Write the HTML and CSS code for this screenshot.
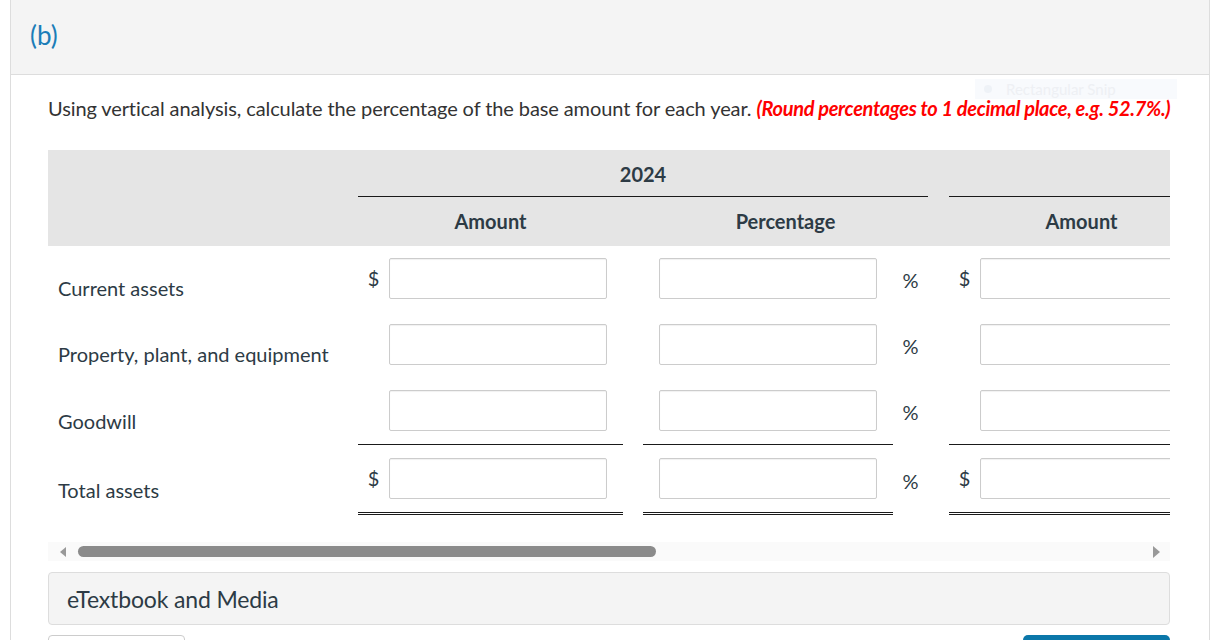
FILE: index.html
```html
<!DOCTYPE html>
<html>
<head>
<meta charset="utf-8">
<link rel="stylesheet" href="styles.css">
</head>
<body>
<div class="card">
  <div class="card-head"><span class="part">(b)</span></div>
  <div class="card-body">
    <div class="snip"><span class="snip-dot"></span><span class="snip-text">Rectangular Snip</span></div>
    <p class="prompt">Using vertical analysis, calculate the percentage of the base amount for each year. <span class="hint">(Round percentages to 1 decimal place, e.g. 52.7%.)</span></p>

    <div class="scroller">
      <div class="inner">
        <div class="thead grid">
          <div class="h-label"></div>
          <div class="h-year y1">2024</div>
          <div class="h-year y2"></div>
          <div class="h-sub c2">Amount</div>
          <div class="h-sub c4">Percentage</div>
          <div class="h-sub c7">Amount</div>
          <div class="h-sub c9"></div>
        </div>

        <div class="tbody grid">
          <!-- row 1 -->
          <div class="lbl">Current assets</div>
          <div class="amt"><span class="sym">$</span><span class="inp"></span></div>
          <div class="gap"></div>
          <div class="pct"><span class="inp"></span></div>
          <div class="psym">%</div>
          <div class="gap"></div>
          <div class="amt"><span class="sym">$</span><span class="inp"></span></div>
          <div class="gap"></div>
          <div class="pct"><span class="inp"></span></div>
          <div class="psym"></div>

          <!-- row 2 -->
          <div class="lbl">Property, plant, and equipment</div>
          <div class="amt"><span class="sym"></span><span class="inp"></span></div>
          <div class="gap"></div>
          <div class="pct"><span class="inp"></span></div>
          <div class="psym">%</div>
          <div class="gap"></div>
          <div class="amt"><span class="sym"></span><span class="inp"></span></div>
          <div class="gap"></div>
          <div class="pct"><span class="inp"></span></div>
          <div class="psym"></div>

          <!-- row 3 -->
          <div class="lbl">Goodwill</div>
          <div class="amt line"><span class="sym"></span><span class="inp"></span></div>
          <div class="gap"></div>
          <div class="pct line"><span class="inp"></span></div>
          <div class="psym">%</div>
          <div class="gap"></div>
          <div class="amt line"><span class="sym"></span><span class="inp"></span></div>
          <div class="gap"></div>
          <div class="pct line"><span class="inp"></span></div>
          <div class="psym"></div>

          <!-- row 4 -->
          <div class="lbl total">Total assets</div>
          <div class="amt dbl"><span class="sym">$</span><span class="inp"></span></div>
          <div class="gap"></div>
          <div class="pct dbl"><span class="inp"></span></div>
          <div class="psym">%</div>
          <div class="gap"></div>
          <div class="amt dbl"><span class="sym">$</span><span class="inp"></span></div>
          <div class="gap"></div>
          <div class="pct dbl"><span class="inp"></span></div>
          <div class="psym"></div>
        </div>
      </div>
    </div>

    <div class="sbar">
      <span class="arr-l"></span>
      <span class="thumb"></span>
      <span class="arr-r"></span>
    </div>

    <div class="media">eTextbook and Media</div>

    <div class="actions">
      <span class="btn-light"></span>
      <span class="btn-blue"></span>
    </div>
  </div>
</div>
</body>
</html>
```

FILE: styles.css
```css
* { box-sizing: border-box; }
html, body { margin: 0; padding: 0; background: #fff; }
body {
  font-family: Lato, "Open Sans", "Liberation Sans", sans-serif;
  color: #333;
  width: 1216px;
  height: 640px;
  overflow: hidden;
}
.card {
  margin-left: 10px;
  width: 1200px;
  height: 640px;
  overflow: hidden;
  border-left: 1px solid #ddd;
  border-right: 1px solid #ddd;
}
.card-head {
  height: 75px;
  background: #f4f4f4;
  border-bottom: 1px solid #ddd;
  padding: 18px 0 0 19px;
}
.part {
  font-size: 26px;
  line-height: 34px;
  color: #1b7db8;
}
.card-body {
  position: relative;
  padding: 20px 38px 0 37px;
}
.snip {
  position: absolute;
  left: 964px;
  top: 4px;
  width: 202px;
  height: 20px;
  background: #f8fafd;
  display: flex;
  align-items: center;
}
.snip-dot {
  width: 8px; height: 8px; border-radius: 50%;
  background: #eef2f7;
  margin: 0 14px 0 9px;
}
.snip-text {
  font-size: 15px;
  line-height: 14px;
  color: #eef0f4;
}
.prompt {
  margin: 0;
  font-size: 20px;
  line-height: 26px;
  color: #333;
  letter-spacing: -0.1px;
  white-space: nowrap;
}
.hint {
  color: #f00;
  font-weight: bold;
  font-style: italic;
  letter-spacing: -0.32px;
}
.scroller {
  margin-top: 29px;
  width: 1122px;
  overflow: hidden;
}
.inner { width: 1471px; }
.grid {
  display: grid;
  grid-template-columns: 310px 265px 20px 250px 35px 21px 265px 20px 250px 35px;
}
.thead {
  background: #e5e5e5;
  grid-template-rows: 47px 49px;
  color: #2d3b45;
  font-weight: bold;
  font-size: 20px;
}
.h-label { grid-column: 1; grid-row: 1 / 3; }
.h-year {
  grid-row: 1;
  border-bottom: 1px solid #1a1a1a;
  display: flex;
  align-items: center;
  justify-content: center;
  padding-top: 1px;
}
.y1 { grid-column: 2 / 6; }
.y2 { grid-column: 7 / 11; }
.h-sub {
  grid-row: 2;
  display: flex;
  align-items: center;
  justify-content: center;
  padding-bottom: 2px;
}
.c2 { grid-column: 2; }
.c4 { grid-column: 4 / 6; }
.c7 { grid-column: 7; }
.c9 { grid-column: 9 / 11; }

.tbody { font-size: 20px; }
.lbl {
  align-self: end;
  padding: 0 0 13px 10px;
  line-height: 22px;
  color: #2d3b45;
}
.lbl.total { padding-bottom: 14px; }
.amt, .pct {
  display: flex;
  align-items: center;
  padding: 12px 0 13px;
}
.amt { padding-right: 16px; }
.pct { padding-left: 16px; padding-right: 16px; }
.sym {
  width: 31px;
  text-align: center;
  color: #2d3b45;
  margin-top: -2px;
}
.psym {
  display: flex;
  align-items: center;
  justify-content: center;
  color: #2d3b45;
  padding-top: 1px;
}
.inp {
  display: block;
  width: 218px;
  height: 41px;
  border: 1px solid #ccc;
  border-radius: 2px;
  background: #fff;
  box-shadow: inset 0 1px 1px rgba(0,0,0,0.06);
}
.line { border-bottom: 1px solid #1a1a1a; }
.dbl { border-bottom: 3px double #1a1a1a; padding-top: 13px; }

.sbar {
  margin-top: 27px;
  width: 1122px;
  height: 19px;
  background: #fafafa;
  position: relative;
}
.arr-l {
  position: absolute;
  left: 12px; top: 5px;
  width: 0; height: 0;
  border-top: 5px solid transparent;
  border-bottom: 5px solid transparent;
  border-right: 6px solid #999;
}
.thumb {
  position: absolute;
  left: 30px; top: 4px;
  width: 578px; height: 11px;
  border-radius: 6px;
  background: #8b8b8b;
}
.arr-r {
  position: absolute;
  left: 1105px; top: 4px;
  width: 0; height: 0;
  border-top: 6px solid transparent;
  border-bottom: 6px solid transparent;
  border-left: 7px solid #999;
}
.media {
  margin-top: 11px;
  width: 1122px;
  height: 53px;
  background: #f4f4f4;
  border: 1px solid #ddd;
  border-radius: 4px;
  padding: 0 0 0 18px;
  display: flex;
  align-items: center;
  font-size: 23px;
  letter-spacing: -0.15px;
  color: #2d3b45;
}
.actions {
  margin-top: 10px;
  width: 1122px;
  display: flex;
  justify-content: space-between;
}
.btn-light {
  width: 137px; height: 40px;
  border: 1px solid #ccc;
  border-radius: 4px;
  background: #fff;
}
.btn-blue {
  width: 147px; height: 40px;
  border-radius: 5px;
  background: #0b77a9;
}
```
